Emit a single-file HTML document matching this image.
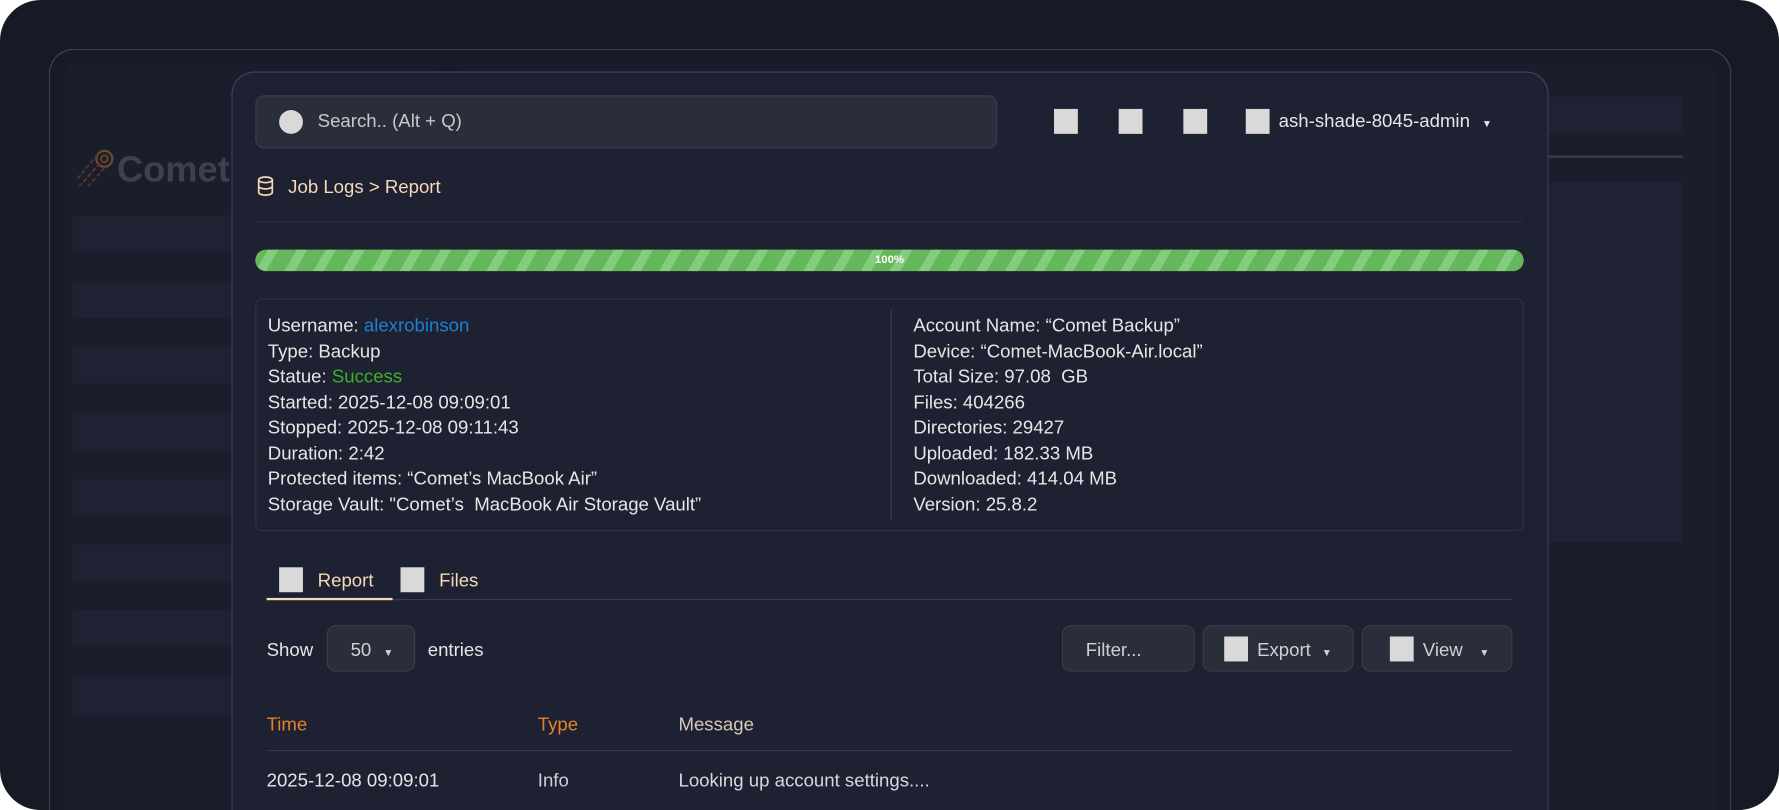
<!DOCTYPE html>
<html><head><meta charset="utf-8"><style>
*{margin:0;padding:0;box-sizing:border-box}
html,body{width:1779px;height:810px;overflow:hidden;background:#fff;font-family:"Liberation Sans",sans-serif}
#s{position:absolute;left:0;top:0;width:1568px;height:714px;transform:scale(1.13457);transform-origin:0 0;overflow:hidden}
.a{position:absolute}
.frame{left:0;top:0;width:1568px;height:714px;background:#161a25;border-radius:36px;overflow:hidden}
.dev{left:43px;top:43px;width:1483px;height:671px;border:1px solid #3b4462;border-bottom:none;border-radius:22px 22px 0 0;background:#171b27}
.bar{background:#1e2233}
.modal{left:204px;top:63px;width:1161px;height:651px;background:#1d2131;border:1px solid #3b4565;border-bottom:none;border-radius:20px 20px 0 0}
.sq{background:#d9d9d9;width:21px;height:22px;position:absolute}
.t{position:absolute;font-size:16.4px;color:#e6e6e6;white-space:nowrap;line-height:18px}
.btn{position:absolute;top:551px;height:41px;background:#2a2d3a;border:1px solid #3a3e4c;border-radius:8px}
</style></head><body><div id="s">
<div class="a frame">
 <div class="a dev"></div>
 <div class="a" style="left:55px;top:55px;width:335px;height:659px;background:#1a1e2b;border-radius:14px 14px 0 0"></div>
 <div class="a" style="left:400px;top:55px;width:1113px;height:659px;background:#1a1e2b;border-radius:14px 14px 0 0"></div>
 <div class="a bar" style="left:64px;top:190px;width:140px;height:32px"></div>
 <div class="a bar" style="left:64px;top:248px;width:140px;height:32px"></div>
 <div class="a bar" style="left:64px;top:306px;width:140px;height:32px"></div>
 <div class="a bar" style="left:64px;top:364px;width:140px;height:32px"></div>
 <div class="a bar" style="left:64px;top:422px;width:140px;height:32px"></div>
 <div class="a bar" style="left:64px;top:480px;width:140px;height:32px"></div>
 <div class="a bar" style="left:64px;top:538px;width:140px;height:32px"></div>
 <div class="a bar" style="left:64px;top:596px;width:140px;height:34px"></div>
 <div class="a bar" style="left:1365px;top:85px;width:118px;height:32px"></div>
 <div class="a" style="left:1365px;top:137px;width:118px;height:2px;background:#3a3f4e"></div>
 <div class="a bar" style="left:1365px;top:160px;width:118px;height:318px"></div>
 <svg class="a" style="left:64px;top:128px" width="40" height="40" viewBox="0 0 40 40"><circle cx="28" cy="12" r="7" fill="none" stroke="#6b4a2a" stroke-width="2"/><circle cx="28" cy="12" r="3" fill="none" stroke="#6b4a2a" stroke-width="1.5"/><path d="M22 8 L4 30 M24 16 L8 34 M20 20 L6 36 M28 20 L14 36" stroke="#5a3326" stroke-width="1.6" stroke-dasharray="4 2"/></svg>
 <div class="t" style="left:103px;top:132px;font-size:32px;line-height:34px;font-weight:bold;color:#3d414c">Comet</div>

 <div class="a modal"></div>
 <div class="a" style="left:225px;top:84px;width:654px;height:47px;background:#2a2d3a;border:1px solid #3a3e4c;border-radius:8px"></div>
 <div class="a" style="left:246px;top:97px;width:21px;height:21px;border-radius:50%;background:#d9d9d9"></div>
 <div class="t" style="left:280px;top:98px;color:#c8c8cc;font-size:16.4px">Search.. (Alt + Q)</div>
 <div class="sq" style="left:929px;top:96px"></div>
 <div class="sq" style="left:986px;top:96px"></div>
 <div class="sq" style="left:1043px;top:96px"></div>
 <div class="sq" style="left:1098px;top:96px"></div>
 <div class="t" style="left:1127px;top:98px;font-size:16.4px">ash-shade-8045-admin <span style="font-size:9px;margin-left:6px">▼</span></div>

 <svg class="a" style="left:226px;top:155px" width="16" height="18" viewBox="0 0 16 18"><ellipse cx="8" cy="3.5" rx="6" ry="2.5" fill="none" stroke="#f5d9b8" stroke-width="1.5"/><path d="M2 3.5v11c0 1.4 2.7 2.5 6 2.5s6-1.1 6-2.5v-11M2 9c0 1.4 2.7 2.5 6 2.5s6-1.1 6-2.5" fill="none" stroke="#f5d9b8" stroke-width="1.5"/></svg>
 <div class="t" style="left:254px;top:156px;color:#f5d9b8">Job Logs &gt; Report</div>
 <div class="a" style="left:225px;top:195px;width:1117px;height:1px;background:#2f3444"></div>

 <div class="a" style="left:225px;top:220px;width:1118px;height:19px;border-radius:10px;background:repeating-linear-gradient(-60deg,#65b75c 0 14px,#86cc7e 14px 22px)"></div>
 <div class="t" style="left:225px;top:221px;width:1118px;text-align:center;font-size:10px;font-weight:bold;color:#fff">100%</div>

 <div class="a" style="left:225px;top:263px;width:1118px;height:205px;border:1px solid #2f3444;border-radius:6px"></div>
 <div class="a" style="left:785px;top:273px;width:1px;height:185px;background:#3a3f4e"></div>
 <div class="t" style="left:236px;top:276px;line-height:22.5px">Username: <span style="color:#1e7fd0">alexrobinson</span><br>Type: Backup<br>Statue: <span style="color:#3cb026">Success</span><br>Started: 2025-12-08 09:09:01<br>Stopped: 2025-12-08 09:11:43<br>Duration: 2:42<br>Protected items: “Comet’s MacBook Air”<br>Storage Vault: "Comet’s&nbsp; MacBook Air Storage Vault”</div>
 <div class="t" style="left:805px;top:276px;line-height:22.5px">Account Name: “Comet Backup”<br>Device: “Comet-MacBook-Air.local”<br>Total Size: 97.08&nbsp; GB<br>Files: 404266<br>Directories: 29427<br>Uploaded: 182.33 MB<br>Downloaded: 414.04 MB<br>Version: 25.8.2</div>

 <div class="sq" style="left:246px;top:500px"></div>
 <div class="t" style="left:280px;top:503px;color:#f5d9b8">Report</div>
 <div class="sq" style="left:353px;top:500px"></div>
 <div class="t" style="left:387px;top:503px;color:#f5d9b8">Files</div>
 <div class="a" style="left:235px;top:528px;width:1098px;height:1px;background:#3b3f4d"></div>
 <div class="a" style="left:235px;top:527px;width:111px;height:2px;background:#f5d9b8"></div>

 <div class="t" style="left:235px;top:564px">Show</div>
 <div class="btn" style="left:288px;width:78px"></div>
 <div class="t" style="left:309px;top:564px;color:#d0d0d4">50 <span style="font-size:9px;margin-left:6px">▼</span></div>
 <div class="t" style="left:377px;top:564px">entries</div>
 <div class="btn" style="left:936px;width:117px"></div>
 <div class="t" style="left:957px;top:564px;color:#d0d0d4">Filter...</div>
 <div class="btn" style="left:1060px;width:133px"></div>
 <div class="sq" style="left:1079px;top:561px"></div>
 <div class="t" style="left:1108px;top:564px;color:#d0d0d4">Export <span style="font-size:9px;margin-left:5px">▼</span></div>
 <div class="btn" style="left:1200px;width:133px"></div>
 <div class="sq" style="left:1225px;top:561px"></div>
 <div class="t" style="left:1254px;top:564px;color:#d0d0d4">View <span style="font-size:9px;margin-left:10px">▼</span></div>

 <div class="t" style="left:235px;top:630px;color:#e8822a">Time</div>
 <div class="t" style="left:474px;top:630px;color:#e8822a">Type</div>
 <div class="t" style="left:598px;top:630px;color:#d8c8b8">Message</div>
 <div class="a" style="left:235px;top:661px;width:1098px;height:1px;background:#343848"></div>
 <div class="t" style="left:235px;top:679px">2025-12-08 09:09:01</div>
 <div class="t" style="left:474px;top:679px;color:#d0d0d4">Info</div>
 <div class="t" style="left:598px;top:679px;color:#d8d8dc">Looking up account settings....</div>
</div>
</div></body></html>
